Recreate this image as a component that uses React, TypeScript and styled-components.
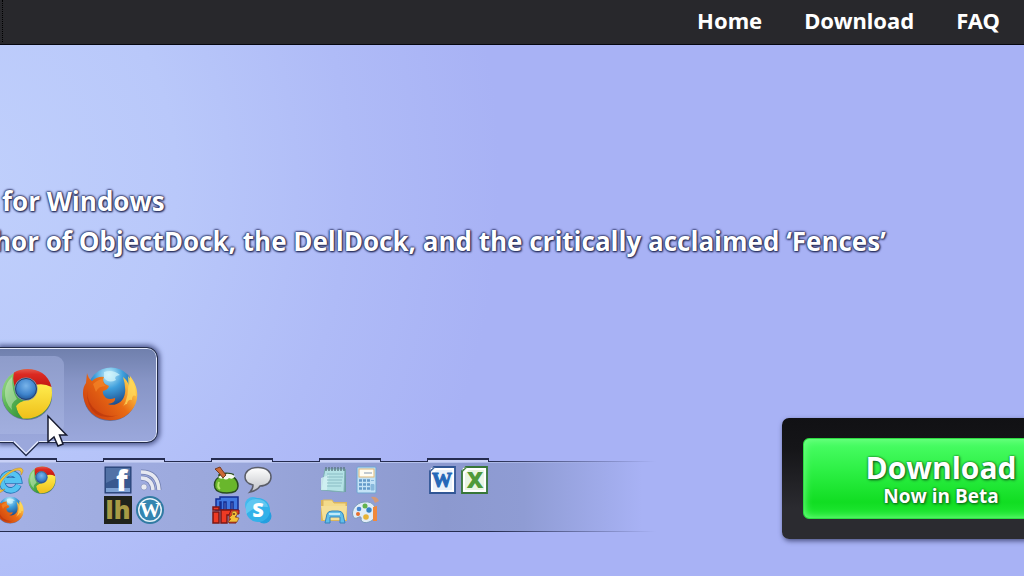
import React from "react";
import styled, { createGlobalStyle, css } from "styled-components";

const GlobalStyle = createGlobalStyle`
  * { box-sizing: border-box; }
  body {
    margin: 0;
    background: #a8b2f5;
    font-family: "Open Sans", "Noto Sans", sans-serif;
    color: #fff;
  }
`;

const Page = styled.div`
  min-height: 100vh;
  overflow: hidden;
  background: radial-gradient(ellipse 540px 620px at -40px 180px, #c0d0fc 0%, #b9c8fa 40%, #afbbf7 72%, #a8b2f5 100%);
`;

const Header = styled.header`
  display: flex;
  justify-content: space-between;
  height: 45px;
  padding: 0 24px 0 2px;
  background: #28282c;
  border-bottom: 1px solid #05060f;
`;

const Divider = styled.span`
  height: 42px;
  border-left: 1px dotted #000;
`;

const Nav = styled.nav`
  display: flex;
  align-items: flex-start;
  gap: 42px;
`;

const NavLink = styled.a`
  color: #fff;
  font-size: 22px;
  line-height: 40px;
  font-family: "Noto Sans", sans-serif;
  font-weight: 700;
  text-decoration: none;
`;

const Tagline = styled.h1`
  margin: 136px 0 86px;
  padding-left: 2px;
  font-size: 26px;
  line-height: 40px;
  font-weight: 700;
  white-space: nowrap;
  text-shadow: 0 0 2px #1c2350, 0 0 2px #1c2350, 1px 1px 2px #2c3360, 0 0 3px #4a5288;
`;

const TagLine = styled.span<{ $cut?: boolean }>`
  display: block;
  margin-left: ${(p) => (p.$cut ? "-8px" : "0")};
`;

const Showcase = styled.section`
  display: flex;
  align-items: flex-start;
  justify-content: space-between;
`;

const DockArea = styled.div`
  flex: 0 0 656px;
`;

const Popup = styled.div`
  position: relative;
  display: flex;
  align-items: center;
  width: 158px;
  height: 96px;
  margin-bottom: 15px;
  border: 1px solid #222b49;
  border-left: 0;
  border-radius: 0 11px 11px 0;
  background: linear-gradient(#6f7fac, #8795c6 35%, #9ba8dc);
  box-shadow: inset 0 2px 0 -1px #e4e9fb, inset -2px 0 0 -1px #e4e9fb, inset 0 -2px 0 -1px #e4e9fb, 0 0 5px 2px #4d578c;
`;

const PopupItem = styled.button<{ $active?: boolean }>`
  display: flex;
  align-items: center;
  justify-content: center;
  width: ${(p) => (p.$active ? "64px" : "92px")};
  height: 78px;
  padding: 0 0 2px;
  border: 0;
  background: none;
  ${(p) =>
    p.$active &&
    css`
      padding-right: 10px;
      border-radius: 0 9px 9px 0;
      background: linear-gradient(#8e9cca, #a2afdf);
    `}
`;

const Pointer = styled.svg`
  position: absolute;
  left: 12px;
  top: 92px;
`;

const Cursor = styled.svg`
  position: absolute;
  left: 46px;
  top: 66px;
`;

const Dock = styled.div`
  display: flex;
  gap: 46px;
  height: 75px;
  margin-left: -5px;
  background:
    linear-gradient(90deg, #252c50 75%, transparent) 0 3px / 100% 1px no-repeat,
    linear-gradient(90deg, #b5c1ec 70%, transparent 95%) 0 4px / 100% 1px no-repeat,
    linear-gradient(90deg, #252c50 75%, transparent) 0 73px / 100% 1px no-repeat,
    linear-gradient(90deg, #a4b1e5 0%, #9ba8dc 35%, #8c99cf 68%, #8f9cd4 80%, #a8b2f500 98%) 0 4px / 100% 69px no-repeat;
`;

const Group = styled.div`
  width: 62px;
`;

const Tab = styled.div`
  height: 4px;
  border: 1px solid #252c50;
  border-top-width: 2px;
  border-bottom: 0;
  background: #c8d0f6;
`;

const IconGrid = styled.div`
  display: grid;
  grid-template-columns: 28px 28px;
  gap: 2px 4px;
  padding: 4px 1px;
`;

const Launcher = styled.button`
  display: block;
  width: 28px;
  height: 28px;
  padding: 0;
  border: 0;
  background: none;
`;

const LogoText = styled.text`
  font-family: "Open Sans", sans-serif;
  font-weight: 800;
`;

const SerifLogoText = styled.text`
  font-family: "Liberation Serif", serif;
  font-weight: 700;
`;

const DownloadPanel = styled.div`
  flex: 0 0 318px;
  margin: 71px -76px 0 0;
  padding: 20px 21px;
  border-radius: 7px;
  background: linear-gradient(#111114, #151518 25%, #2b2b30 75%);
  box-shadow: 1px 2px 5px #4b5283;
`;

const DownloadButton = styled.button`
  display: flex;
  flex-direction: column;
  align-items: center;
  justify-content: center;
  width: 100%;
  height: 81px;
  padding: 2px 0 0;
  border: 1px solid #2ddc42;
  border-radius: 6px;
  background: linear-gradient(#4cff68, #2df045 40%, #11dd22 80%, #22ea36);
  box-shadow: inset 0 0 9px #7dff8e;
  color: #fff;
  font-family: inherit;
  font-weight: 700;
  text-shadow: 1px 1px 3px #0b5a16, 0 0 2px #0b5a16;
`;

const ButtonTitle = styled.span`
  font-size: 30px;
  line-height: 32px;
`;

const ButtonNote = styled.span`
  font-size: 19px;
  line-height: 24px;
`;

function Chrome({ size }: { size: number }) {
  return (
    <svg width={size} height={size} viewBox="0 0 52 52" aria-hidden="true">
      <defs>
        <radialGradient id="cb" cx=".5" cy=".35" r=".7"><stop stopColor="#79b4ea" /><stop offset=".6" stopColor="#3f84cc" /><stop offset="1" stopColor="#1d5090" /></radialGradient>
        <linearGradient id="cg" x2="1" y2="1"><stop stopColor="#a5dc92" /><stop offset=".4" stopColor="#5cb856" /><stop offset="1" stopColor="#2c8a34" /></linearGradient>
        <linearGradient id="cr" x2="0" y2="1"><stop stopColor="#e4574c" /><stop offset=".3" stopColor="#dc2a22" /><stop offset="1" stopColor="#c11812" /></linearGradient>
        <linearGradient id="cy" x2="0" y2="1"><stop stopColor="#ffec4e" /><stop offset="1" stopColor="#eebf19" /></linearGradient>
      </defs>
      <ellipse cx="26" cy="28" rx="25" ry="24" fill="#394462" opacity=".55" />
      <circle cx="26" cy="26" r="25" fill="url(#cg)" />
      <path d="M13 4.500C23-2 46-1 50.500 19Q42 17 34 17Q30 10 22 11Q16 12 14 19Q11 12 13 4.500Z" fill="url(#cr)" />
      <path d="M34 17Q43 15 50.500 19C54 39 39 52 22 50.500Q16 45 15 38Q19 32 29 31Q37 26 34 17Z" fill="url(#cy)" />
      <path d="M2 20Q4 11 12 6Q11 14 15 24Q16 32 26 32Q17 34 15 38Q16 45 21 50.500C8 49-1 36 2 20Z" fill="url(#cg)" />
      <path d="M4 23Q5 14 11 9Q11 24 16 31Q9 35 11 42Q3 34 4 23Z" fill="#dff4d2" opacity=".45" />
      <circle cx="25" cy="21" r="11.500" fill="#7f93ad" />
      <circle cx="25" cy="21" r="10.500" fill="url(#cb)" stroke="#24406b" />
    </svg>
  );
}

function Firefox({ size }: { size: number }) {
  return (
    <svg width={size} height={size} viewBox="0 0 56 56" aria-hidden="true">
      <defs>
        <radialGradient id="fb" cx=".45" cy=".15" r=".75"><stop stopColor="#c7f1fb" /><stop offset=".4" stopColor="#3f9fdc" /><stop offset="1" stopColor="#123576" /></radialGradient>
        <linearGradient id="fo" x1=".1" x2=".9" y1=".8" y2=".2"><stop stopColor="#cf420f" /><stop offset=".55" stopColor="#e96b14" /><stop offset="1" stopColor="#ffd34d" /></linearGradient>
      </defs>
      <ellipse cx="28" cy="31" rx="26" ry="24" fill="#303b60" opacity=".5" />
      <circle cx="29" cy="25" r="23.500" fill="url(#fb)" />
      <path d="M22 6Q31 3 38 9Q31 10 34 14Q27 18 22 12Z" fill="#d5f6fc" opacity=".7" />
      <path d="M5 7Q6 12 10 15Q16 10 22 11Q20 15 23 18L27 20Q26 24 21 25Q20 29 24 32Q28 34 33 32Q34 37 26 38C33 41 42 36 43 27Q44 20 41 11Q46 15 47 20L48 10C57 21 58 35 49 45C38 58 17 57 7 44C-1 33 0 22 4 17Z" fill="url(#fo)" />
      <path d="M46 10Q54 18 54 30Q50 28 50 34Q46 33 45 38Q42 38 40 43Q48 31 46 10Z" fill="#ffd95c" opacity=".75" />
      <path d="M11 18Q17 13 21 13Q20 17 24 20Q16 20 14 26Z" fill="#f3862a" opacity=".7" />
      <path d="M5 24Q5 38 15 45Q25 52 36 49Q24 54 14 48Q4 40 5 24Z" fill="#a92b0b" opacity=".45" />
    </svg>
  );
}

const Svg = ({ children }: { children: React.ReactNode }) => (
  <svg width="28" height="28" viewBox="0 0 28 28" aria-hidden="true">{children}</svg>
);

const InternetExplorer = () => (
  <Svg>
    <path d="M22.500 19A8.500 8.500 0 1 1 23 14.500H9" fill="none" stroke="#2474b6" strokeWidth="6.500" />
    <path d="M22.500 19A8.500 8.500 0 1 1 23 14.500H9" fill="none" stroke="#55c3f2" strokeWidth="4.800" />
    <path d="M2 26C-4 18 14 1 25 2Q29 4 25 9Q26 4 21 4C12 6 2 17 4 23Q5 25 9 23Q4 28 2 26Z" fill="#f3c53a" stroke="#b98623" strokeWidth=".5" />
  </Svg>
);

const Facebook = () => (
  <Svg>
    <rect x="1" y="1" width="26" height="26" fill="#38588f" stroke="#243d70" />
    <path d="M2 2H26V10Q12 11 2 17Z" fill="#6484b5" opacity=".6" />
    <path d="M2 22H26V26H2Z" fill="#7da1d4" />
    <LogoText x="12" y="25" fontSize="28" fill="#fff">f</LogoText>
  </Svg>
);

const Feed = () => (
  <Svg>
    <g fill="none" stroke="#6f7daf" strokeWidth="5"><path d="M5 12Q16 12 17 24M5 6Q22 6 23 24" /></g>
    <g fill="none" stroke="#e6e8f1" strokeWidth="3.500"><path d="M5 12Q16 12 17 24M5 6Q22 6 23 24" /></g>
    <circle cx="8" cy="21" r="3" fill="#e8eaf2" stroke="#7380ac" strokeWidth=".5" />
  </Svg>
);

const Lifehacker = () => (
  <Svg>
    <rect x="0" y="0" width="28" height="28" fill="#20231c" />
    <LogoText x="14" y="23" textAnchor="middle" fontSize="25" fill="#a89a45">lh</LogoText>
  </Svg>
);

const WordPress = () => (
  <Svg>
    <circle cx="14" cy="14" r="13" fill="#e6f2f8" stroke="#317ba3" strokeWidth="2" />
    <circle cx="14" cy="14" r="10.500" fill="#3485b0" />
    <SerifLogoText x="14" y="21" textAnchor="middle" fontSize="21" fill="#fff">W</SerifLogoText>
  </Svg>
);

const Notebag = () => (
  <Svg>
    <path d="M7 11Q1 15 3 22Q5 27 15 27Q26 27 26 20Q26 14 21 11Q22 8 20 8Q12 6 7 9Z" fill="#69b72c" stroke="#294b21" strokeWidth="1.500" />
    <path d="M6 11Q15 5 23 10Q21 14 17 12Q14 15 11 12Q9 14 6 11Z" fill="#f7faef" />
    <path d="M3 3L8 1L10 4L14 9L11 12L7 7Z" fill="#cd6a35" stroke="#713c26" />
    <path d="M7 16Q5 21 8 23" fill="none" stroke="#b4e56d" strokeWidth="2" />
  </Svg>
);

const Chat = () => (
  <Svg>
    <defs><linearGradient id="chat" x2="0" y2="1"><stop stopColor="#fff" /><stop offset="1" stopColor="#bfc1c6" /></linearGradient></defs>
    <path d="M14 1.500C5 1.500 1 6 1 11Q1 17 9 19Q9 23 6 26Q14 24 16 20C23 20 27 16 27 11C27 6 23 1.500 14 1.500Z" fill="url(#chat)" stroke="#5a5d68" strokeWidth="1.500" />
  </Svg>
);

const Mirc = () => (
  <Svg>
    <path d="M4 14V3H8V1H26V14H21V6H19V14H14V6H12V14H9V6H8V14Z" fill="#4078e2" stroke="#152d92" strokeWidth="1.500" />
    <path d="M1 11H7V14H1ZM1 16H7V27H1ZM9 14H20V19H15V27H9Z" fill="#ee3a24" stroke="#7c1715" strokeWidth="1.500" />
    <path d="M19 14H27V18H24V27H17V19Z" fill="#e63a22" stroke="#7c1715" />
    <path d="M17 22L20 19Q19 15 22 15Q26 15 25 19L23 21L27 22L25 26H16L19 23Z" fill="#f4bf37" stroke="#8e4c1d" strokeWidth=".7" />
    <circle cx="22" cy="18" r="1" fill="#5b3520" />
  </Svg>
);

const Skype = () => (
  <Svg>
    <circle cx="9" cy="9" r="8" fill="#42b9ee" /><circle cx="20" cy="20" r="7.500" fill="#239fdf" /><circle cx="14" cy="14" r="12" fill="#33b1e9" />
    <path d="M2 11Q4 3 12 3Q22 3 24 11Q12 9 2 18Z" fill="#84d8f7" opacity=".55" />
    <LogoText x="14" y="21" textAnchor="middle" fontSize="20" fill="#fff">S</LogoText>
  </Svg>
);

const Notepad = () => (
  <Svg>
    <path d="M5 3H26L26 26H16L2 24Z" fill="#6d9ea5" />
    <path d="M5 3H25L24 26L1 24Z" fill="#b4e2e5" stroke="#7eaeb5" />
    <path d="M1 12L9 9L7 24L1 24Z" fill="#d5f2f4" opacity=".8" />
    <path d="M7 8H23M7 11H23M7 14H22M7 17H22M7 20H21" stroke="#8abcc4" />
    <path d="M6 1V5M9 1V5M12 1V5M15 1V5M18 1V5M21 1V5M24 1V5" stroke="#57747e" strokeWidth="1.300" />
  </Svg>
);

const Calculator = () => (
  <Svg>
    <rect x="5" y="1" width="19" height="26" rx="1" fill="#c3e2f6" stroke="#6fa5d1" />
    <rect x="7" y="3" width="15" height="8" fill="#fffdf3" stroke="#dfb877" />
    <path d="M12 7H20" stroke="#c3cbd0" strokeWidth="2" />
    <path d="M7 14.500H10M11 14.500H14M15 14.500H18M7 18.500H10M11 18.500H14M15 18.500H18M7 22.500H10M11 22.500H14M15 22.500H18" stroke="#6399c9" strokeWidth="2.400" />
    <path d="M19 14.500H22M19 18.500H22V24H19Z" fill="#88b8dc" stroke="#88b8dc" />
  </Svg>
);

const Explorer = () => (
  <Svg>
    <path d="M1 4H11L13 6H27V25H1Z" fill="#dcb55b" />
    <path d="M3 4H12L14 7H26V22H3Z" fill="#f4db8a" stroke="#d9b565" />
    <path d="M1 10H27L26 24H3Z" fill="#f5df97" />
    <path d="M5 27L7 18Q8 15 12 15H18Q22 15 23 18L25 27H20V21H10V27Z" fill="#61bee9" stroke="#3683bc" />
    <path d="M9 18H20" stroke="#c0eafa" strokeWidth="2" />
  </Svg>
);

const Paint = () => (
  <Svg>
    <path d="M12 6C3 7-1 15 1 20Q2 24 7 21Q10 20 9 24Q11 28 17 26C23 24 26 17 23 11Q20 5 12 6Z" fill="#e1edf7" stroke="#7a9abb" />
    <circle cx="7" cy="13" r="2.300" fill="#4688d0" /><circle cx="13" cy="10" r="2.500" fill="#63b44d" /><circle cx="6" cy="18" r="2" fill="#e66e2e" /><circle cx="17" cy="14" r="2.700" fill="#3583c5" /><circle cx="14" cy="21" r="2.800" fill="#e7b337" />
    <path d="M21 11L25 10V25H21Z" fill="#f0883a" /><path d="M19 1Q25 0 27 5L23 7Q22 4 19 1Z" fill="#d39a78" />
  </Svg>
);

const Word = () => (
  <Svg>
    <path d="M6 1H27V27H2V5Z" fill="#dce9f7" stroke="#315695" strokeWidth="1.800" />
    <path d="M5 6L8 3H25V25H4V7Z" fill="#e9f2fb" stroke="#fff" strokeWidth="2" />
    <path d="M1 8Q2 2 8 1L3 2Z" fill="#fff" />
    <SerifLogoText x="14" y="21" textAnchor="middle" fontSize="20" fill="#2468b8" stroke="#2468b8">W</SerifLogoText>
  </Svg>
);

const Excel = () => (
  <Svg>
    <path d="M6 1H27V27H2V5Z" fill="#dff0d9" stroke="#377638" strokeWidth="1.800" />
    <path d="M5 6L8 3H25V25H4V7Z" fill="#e9f5e3" stroke="#fff" strokeWidth="2" />
    <path d="M1 8Q2 2 8 1L3 2Z" fill="#fff" />
    <LogoText x="15" y="22" textAnchor="middle" fontSize="23" fill="#4f9a3a">X</LogoText>
  </Svg>
);

const groups = [
  [
    ["Internet Explorer", <InternetExplorer />],
    ["Chrome", <Chrome size={28} />],
    ["Firefox", <Firefox size={28} />],
  ],
  [
    ["Facebook", <Facebook />],
    ["News feed", <Feed />],
    ["Lifehacker", <Lifehacker />],
    ["WordPress", <WordPress />],
  ],
  [
    ["Messenger", <Notebag />],
    ["Chat", <Chat />],
    ["mIRC", <Mirc />],
    ["Skype", <Skype />],
  ],
  [
    ["Notepad", <Notepad />],
    ["Calculator", <Calculator />],
    ["Explorer", <Explorer />],
    ["Paint", <Paint />],
  ],
  [
    ["Word", <Word />],
    ["Excel", <Excel />],
  ],
] as [string, React.ReactElement][][];

export default function App() {
  return (
    <Page>
      <GlobalStyle />
      <Header>
        <Divider />
        <Nav>
          <NavLink href="#home">Home</NavLink>
          <NavLink href="#download">Download</NavLink>
          <NavLink href="#faq">FAQ</NavLink>
        </Nav>
      </Header>
      <main>
        <Tagline>
          <TagLine>for Windows</TagLine>
          <TagLine $cut>hor of ObjectDock, the DellDock, and the critically acclaimed ‘Fences’</TagLine>
        </Tagline>
        <Showcase>
          <DockArea>
            <Popup>
              <PopupItem $active aria-label="Chrome"><Chrome size={52} /></PopupItem>
              <PopupItem aria-label="Firefox"><Firefox size={56} /></PopupItem>
              <Pointer width="28" height="18" viewBox="0 0 28 18" aria-hidden="true">
                <path d="M1 0V2L14 15L27 2V0Z" fill="#9ba8dc" />
                <path d="M1 2.500L14 15.500L27 2.500" fill="none" stroke="#222b49" strokeWidth="1.300" />
                <path d="M2 1.500L14 13.500L26 1.500" fill="none" stroke="#e4e9fb" strokeWidth="1.200" />
              </Pointer>
              <Cursor width="24" height="36" viewBox="0 0 24 36" aria-hidden="true">
                <path d="M2 2V28L8 23L12 32L17 30L13.500 21H20.500Z" fill="#fff" stroke="#171b30" strokeWidth="1.500" />
              </Cursor>
            </Popup>
            <Dock>
              {groups.map((group, i) => (
                <Group key={i}>
                  <Tab />
                  <IconGrid>
                    {group.map(([name, icon]) => (
                      <Launcher key={name} aria-label={name}>{icon}</Launcher>
                    ))}
                  </IconGrid>
                </Group>
              ))}
            </Dock>
          </DockArea>
          <DownloadPanel>
            <DownloadButton>
              <ButtonTitle>Download</ButtonTitle>
              <ButtonNote>Now in Beta</ButtonNote>
            </DownloadButton>
          </DownloadPanel>
        </Showcase>
      </main>
    </Page>
  );
}
